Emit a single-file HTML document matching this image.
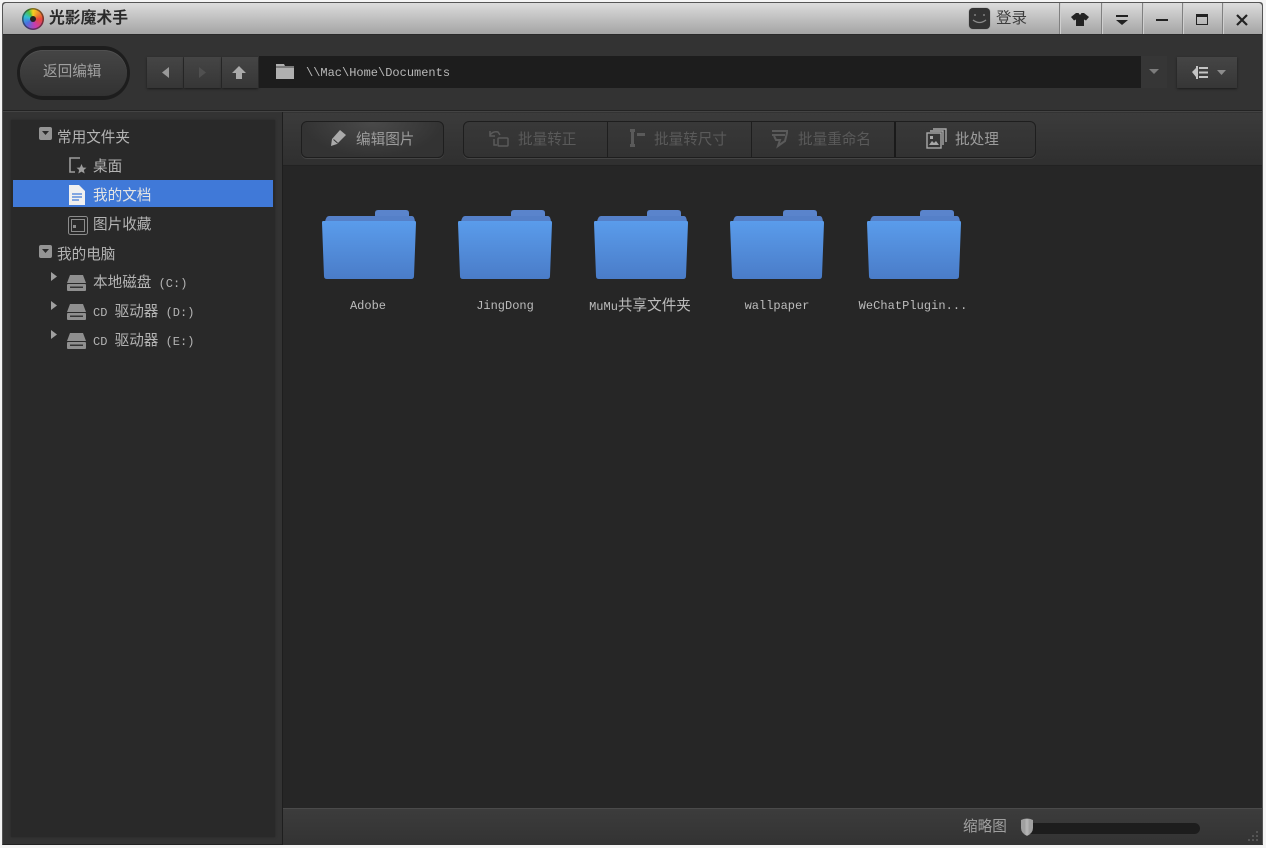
<!DOCTYPE html>
<html lang="zh-CN"><head><meta charset="utf-8"><title>光影魔术手</title>
<style>
*{box-sizing:border-box;margin:0;padding:0}
html,body{width:1266px;height:848px;overflow:hidden;background:#f4f4f4}
body{position:relative;font-family:"Liberation Sans","Noto Sans CJK SC",sans-serif;font-size:14.6px;color:#b4b4b4;filter:blur(.35px)}
.a{position:absolute}
.t{position:absolute;white-space:nowrap;line-height:20px;font-family:"Liberation Mono","Noto Sans CJK SC",monospace}
.cn{font-family:"Liberation Sans","Noto Sans CJK SC",sans-serif}
svg{position:absolute;overflow:visible}
.sep{position:absolute;top:3px;width:1px;height:31px;background:#808080;box-shadow:1px 0 0 #cfcfcf}
.nav{position:absolute;top:57px;height:31px;background:linear-gradient(#454545,#363636);box-shadow:0 1px 2px #1c1c1c}
.lab{position:absolute;width:130px;text-align:center;font-size:12px;line-height:18px;top:297px;color:#bcbcbc;font-family:"Liberation Mono","Noto Sans CJK SC",monospace;white-space:nowrap}
.dim{color:#5a5a5a}
</style></head><body>
<div class="a" style="left:2px;top:2px;width:1261px;height:843px;background:#333;border:1px solid #555;border-radius:3px 3px 0 0;border-bottom-color:#222"></div>
<div class="a" style="left:3px;top:3px;width:1259px;height:31px;background:linear-gradient(#dcdcdc,#a4a4a4);border-radius:3px 3px 0 0"></div>
<div class="a" style="left:3px;top:34px;width:1259px;height:1px;background:#2a2a2a"></div>

<div class="a" style="left:22px;top:8px;width:22px;height:22px;border-radius:50%;background:conic-gradient(#f5d020,#e8483a 25%,#c83cb0 45%,#4a6fe0 65%,#30c0d0 80%,#50c040 92%,#f5d020);box-shadow:inset 0 0 0 1.500px rgba(30,30,30,.55)"></div>
<div class="a" style="left:30px;top:16px;width:6px;height:6px;border-radius:50%;background:#222"></div>
<div class="t cn" style="left:49px;top:9px;font-size:15.800px;font-weight:bold;color:#2a2a2a">光影魔术手</div>

<div class="a" style="left:969px;top:8px;width:21px;height:21px;background:#333;border-radius:4px;box-shadow:0 0 1px #666"></div>
<svg style="left:969px;top:8px" width="21" height="21" fill="none" stroke="#8c8c8c" stroke-width="1.300"><path d="M4 12q6.500 5 13 0"/><path d="M6 6v2M15 6v2"/></svg>
<div class="t cn" style="left:996px;top:9px;font-size:15.500px;color:#3c3c3c">登录</div>
<div class="sep" style="left:1059px"></div><div class="sep" style="left:1101px"></div><div class="sep" style="left:1142px"></div><div class="sep" style="left:1182px"></div><div class="sep" style="left:1222px"></div>
<svg style="left:1071px;top:13px" width="18" height="13" fill="#222"><path d="M0 4l5-4h2.500L9 2l1.500-2H13l5 4-3 3.500-2-1V13H5V6.500l-2 1z"/></svg>
<svg style="left:1115px;top:14px" width="14" height="12" fill="#222"><rect x="1" y="1" width="12" height="2"/><path d="M1 6h12l-6 5z"/></svg>
<div class="a" style="left:1156px;top:19px;width:12px;height:2px;background:#222"></div>
<div class="a" style="left:1196px;top:14px;width:12px;height:11px;border:1.500px solid #222;border-top-width:3px"></div>
<svg style="left:1236px;top:14px" width="12" height="12" stroke="#222" stroke-width="2.200"><path d="M1 1l10 10M11 1L1 11"/></svg>

<div class="a" style="left:17px;top:46px;width:113px;height:54px;border-radius:27px;background:#1d1d1d"></div>
<div class="a" style="left:20px;top:50px;width:107px;height:46px;border-radius:23px;background:linear-gradient(#454545,#323232);box-shadow:inset 0 1px 0 #505050"></div>
<div class="t cn" style="left:43px;top:62px;font-size:14.600px;color:#a0a0a0">返回编辑</div>

<div class="nav" style="left:147px;width:36px"></div><div class="nav" style="left:184px;width:37px"></div><div class="nav" style="left:222px;width:36px"></div>
<svg style="left:147px;top:57px" width="112" height="31"><path d="M22 10v11l-7-5.500z" fill="#999"/><path d="M52 10v11l7-5.500z" fill="#505050"/><path d="M92 9l-7 7h4v6h6v-6h4z" fill="#aaa"/></svg>
<div class="a" style="left:259px;top:56px;width:882px;height:32px;background:#1d1d1d"></div>
<svg style="left:276px;top:63px" width="18" height="17"><path d="M0 1h8l1 2h9v13H0z" fill="#b0b0b0"/><rect y="3.500" width="18" height="1" fill="#444"/></svg>
<div class="t" style="left:306px;top:63px;font-size:12px;color:#b8b8b8">\\Mac\Home\Documents</div>
<div class="a" style="left:1141px;top:56px;width:26px;height:32px;background:#363636"></div>
<svg style="left:1149px;top:69px" width="10" height="6"><path d="M0 0h10L5 5z" fill="#7c7c7c"/></svg>
<div class="a" style="left:1177px;top:57px;width:60px;height:31px;background:linear-gradient(#454545,#363636);box-shadow:0 1px 2px #1c1c1c"></div>
<svg style="left:1192px;top:65px" width="36" height="15"><path d="M0 7l4-4v9z" fill="#c4c4c4"/><rect x="4" y="1" width="2" height="13" fill="#c4c4c4"/><path d="M7 2h9v2H7zM7 6.500h9v2H7zM7 11h9v2H7z" fill="#c4c4c4"/><path d="M25 5h9l-4.500 5z" fill="#8c8c8c"/></svg>

<div class="a" style="left:3px;top:110px;width:1259px;height:1px;background:#232323"></div>
<div class="a" style="left:3px;top:111px;width:1259px;height:1px;background:#444"></div>
<div class="a" style="left:11px;top:120px;width:264px;height:717px;background:#292929;box-shadow:0 0 2px #252525"></div>
<div class="a" style="left:13px;top:180px;width:260px;height:27px;background:#4079d8"></div>

<div class="a" style="left:39px;top:127px;width:13px;height:13px;background:#949494;border-radius:2px"></div><svg style="left:42px;top:131px" width="8" height="5"><path d="M0 0h7L3.500 4z" fill="#2a2a2a"/></svg>
<div class="t cn" style="left:57px;top:128px">常用文件夹</div>
<svg style="left:68px;top:157px" width="20" height="18" fill="none"><path d="M12 1H2v14h5" stroke="#9c9c9c" stroke-width="1.600"/><path d="M13.500 7l1.500 3.500 3.500.3-2.700 2.200.9 3.500-3.200-1.900-3.200 1.900.9-3.500-2.700-2.200 3.500-.3z" fill="#9c9c9c"/></svg>
<div class="t cn" style="left:93px;top:157px">桌面</div>
<svg style="left:69px;top:185px" width="17" height="20"><path d="M0 0h10l6 6v14H0z" fill="#f0f0f0"/><path d="M3 9h10M3 12h10M3 15h7" stroke="#4079d8" stroke-width="1.200"/></svg>
<div class="t cn" style="left:93px;top:186px;color:#e4e4e4">我的文档</div>
<svg style="left:68px;top:216px" width="20" height="19" fill="none" stroke="#8c8c8c"><rect x=".5" y=".5" width="19" height="18" rx="2"/><rect x="3.500" y="3.500" width="13" height="12"/><rect x="5" y="9" width="3" height="3" fill="#8c8c8c" stroke="none"/></svg>
<div class="t cn" style="left:93px;top:215px">图片收藏</div>
<div class="a" style="left:39px;top:245px;width:13px;height:13px;background:#949494;border-radius:2px"></div><svg style="left:42px;top:249px" width="8" height="5"><path d="M0 0h7L3.500 4z" fill="#2a2a2a"/></svg>
<div class="t cn" style="left:57px;top:245px">我的电脑</div>

<svg style="left:51px;top:272px" width="6" height="10"><path d="M0 0l6 4.500L0 9z" fill="#a0a0a0"/></svg>
<svg style="left:51px;top:301px" width="6" height="10"><path d="M0 0l6 4.500L0 9z" fill="#a0a0a0"/></svg>
<svg style="left:51px;top:330px" width="6" height="10"><path d="M0 0l6 4.500L0 9z" fill="#a0a0a0"/></svg>
<svg style="left:66px;top:275px" width="21" height="16"><path d="M4 0h13l3 8H1z" fill="#8f8f8f"/><rect x="1" y="9" width="19" height="7" rx="1" fill="#8f8f8f"/><rect x="4" y="11.500" width="13" height="1.500" fill="#333"/></svg>
<svg style="left:66px;top:304px" width="21" height="16"><path d="M4 0h13l3 8H1z" fill="#8f8f8f"/><rect x="1" y="9" width="19" height="7" rx="1" fill="#8f8f8f"/><rect x="4" y="11.500" width="13" height="1.500" fill="#333"/></svg>
<svg style="left:66px;top:333px" width="21" height="16"><path d="M4 0h13l3 8H1z" fill="#8f8f8f"/><rect x="1" y="9" width="19" height="7" rx="1" fill="#8f8f8f"/><rect x="4" y="11.500" width="13" height="1.500" fill="#333"/></svg>
<div class="t" style="left:93px;top:273px;font-size:12px"><span class="cn" style="font-size:14.600px">本地磁盘</span> (C:)</div>
<div class="t" style="left:93px;top:302px;font-size:12px">CD <span class="cn" style="font-size:14.600px">驱动器</span> (D:)</div>
<div class="t" style="left:93px;top:331px;font-size:12px">CD <span class="cn" style="font-size:14.600px">驱动器</span> (E:)</div>

<div class="a" style="left:282px;top:112px;width:1px;height:733px;background:#1e1e1e"></div>
<div class="a" style="left:283px;top:113px;width:979px;height:53px;background:linear-gradient(#3b3b3b,#2f2f2f);box-shadow:inset 0 -1px 0 #222"></div>
<div class="a" style="left:283px;top:166px;width:979px;height:642px;background:#262626"></div>
<div class="a" style="left:283px;top:808px;width:979px;height:37px;background:linear-gradient(#3c3c3c,#333);border-top:1px solid #4a4a4a"></div>

<div class="a" style="left:301px;top:121px;width:143px;height:37px;border:1px solid #1e1e1e;border-radius:6px;background:radial-gradient(ellipse at 50% 0,#4a4a4a,#333 70%);box-shadow:0 1px 0 #444"></div>
<svg style="left:329px;top:129px" width="18" height="18"><path d="M11 1l6 5-9 9-6 2 1-7z" fill="#aaa"/><path d="M4.500 10.500l4 3.500" stroke="#333"/></svg>
<div class="t cn" style="left:356px;top:130px;font-size:14.600px;color:#9c9c9c">编辑图片</div>

<div class="a" style="left:463px;top:121px;width:573px;height:37px;border:1px solid #1e1e1e;border-radius:6px;background:linear-gradient(#383838,#323232);box-shadow:0 1px 0 #444"></div>
<div class="a" style="left:607px;top:122px;width:1px;height:35px;background:#1e1e1e"></div>
<div class="a" style="left:751px;top:122px;width:1px;height:35px;background:#1e1e1e"></div>
<div class="a" style="left:894px;top:122px;width:2px;height:35px;background:#1a1a1a"></div>
<svg style="left:489px;top:130px" width="21" height="18" fill="none" stroke="#5a5a5a" stroke-width="1.500"><path d="M1 5q3-4 8-3l2 3"/><path d="M1 1v5h5" /><rect x="9" y="8" width="10" height="8" rx="1"/><path d="M5 9v6h3"/></svg>
<div class="t cn dim" style="left:518px;top:130px;font-size:14.600px">批量转正</div>
<svg style="left:627px;top:129px" width="20" height="20" fill="#5a5a5a"><rect x="3" y="0" width="5" height="3"/><rect x="3" y="15" width="5" height="3"/><rect x="4" y="3" width="3" height="12"/><rect x="10" y="4" width="8" height="3"/></svg>
<div class="t cn dim" style="left:654px;top:130px;font-size:14.600px">批量转尺寸</div>
<svg style="left:771px;top:130px" width="18" height="18" fill="none" stroke="#5a5a5a" stroke-width="2"><path d="M1 1h15v2l-2 8-7 5 2-6H5L3 6M1 5h13"/></svg>
<div class="t cn dim" style="left:798px;top:130px;font-size:14.600px">批量重命名</div>
<svg style="left:926px;top:128px" width="21" height="22" fill="none" stroke="#a8a8a8" stroke-width="1.400"><rect x="1" y="5" width="14" height="15"/><path d="M4 3h13v14M7 1h13v13"/><path d="M3 17l3-4 2 2 2-2 3 4z" fill="#a8a8a8" stroke="none"/><rect x="4" y="8" width="3" height="3" fill="#a8a8a8" stroke="none"/></svg>
<div class="t cn" style="left:955px;top:130px;font-size:14.600px;color:#9c9c9c">批处理</div>

<svg width="0" height="0"><defs>
<linearGradient id="f" x1="0" y1="0" x2="0" y2="1"><stop offset="0" stop-color="#5a9ceb"/><stop offset="1" stop-color="#4a7cc8"/></linearGradient>
<symbol id="fd" viewBox="0 0 95 71"><path d="M56 1h28q3 0 3 3v6H53V4q0-3 3-3z" fill="#5a84cc"/><path d="M7 7q-3 0-4 6h90q-.5-6-3-6z" fill="#5580c8"/><path d="M1 12h92q1 0 1 2l-2 53q0 3-3 3H5q-3 0-3-3L0 14q0-2 1-2z" fill="url(#f)"/></symbol>
</defs></svg>
<svg style="left:322px;top:209px" width="95" height="71"><use href="#fd"/></svg>
<svg style="left:458px;top:209px" width="95" height="71"><use href="#fd"/></svg>
<svg style="left:594px;top:209px" width="95" height="71"><use href="#fd"/></svg>
<svg style="left:730px;top:209px" width="95" height="71"><use href="#fd"/></svg>
<svg style="left:867px;top:209px" width="95" height="71"><use href="#fd"/></svg>
<div class="lab" style="left:303px">Adobe</div>
<div class="lab" style="left:440px">JingDong</div>
<div class="lab" style="left:575px">MuMu<span class="cn" style="font-size:14.600px">共享文件夹</span></div>
<div class="lab" style="left:712px">wallpaper</div>
<div class="lab" style="left:848px;letter-spacing:.05px">WeChatPlugin...</div>

<div class="t cn" style="left:963px;top:817px;font-size:14.600px;color:#a0a0a0">缩略图</div>
<div class="a" style="left:1022px;top:823px;width:178px;height:11px;border-radius:6px;background:#1d1d1d"></div>
<svg style="left:1020px;top:818px" width="14" height="19"><path d="M1 2q6-3 12 0v8q0 5-6 8-6-3-6-8z" fill="#a0a0a0"/><path d="M7 1v16" stroke="#c0c0c0" stroke-width="3" opacity=".6"/></svg>
<svg style="left:1246px;top:830px" width="14" height="13" fill="#555"><rect x="10" y="1" width="2" height="2"/><rect x="6" y="5" width="2" height="2"/><rect x="10" y="5" width="2" height="2"/><rect x="2" y="9" width="2" height="2"/><rect x="6" y="9" width="2" height="2"/><rect x="10" y="9" width="2" height="2"/></svg>
</body></html>
